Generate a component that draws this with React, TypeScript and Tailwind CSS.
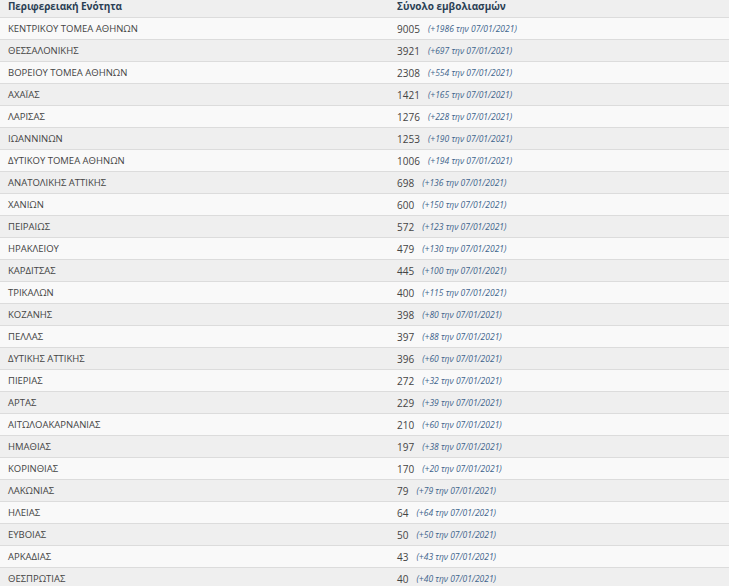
const rows: [string, number, number][] = [
    ["ΚΕΝΤΡΙΚΟΥ ΤΟΜΕΑ ΑΘΗΝΩΝ", 9005, 1986],
    ["ΘΕΣΣΑΛΟΝΙΚΗΣ", 3921, 697],
    ["ΒΟΡΕΙΟΥ ΤΟΜΕΑ ΑΘΗΝΩΝ", 2308, 554],
    ["ΑΧΑΪΑΣ", 1421, 165],
    ["ΛΑΡΙΣΑΣ", 1276, 228],
    ["ΙΩΑΝΝΙΝΩΝ", 1253, 190],
    ["ΔΥΤΙΚΟΥ ΤΟΜΕΑ ΑΘΗΝΩΝ", 1006, 194],
    ["ΑΝΑΤΟΛΙΚΗΣ ΑΤΤΙΚΗΣ", 698, 136],
    ["ΧΑΝΙΩΝ", 600, 150],
    ["ΠΕΙΡΑΙΩΣ", 572, 123],
    ["ΗΡΑΚΛΕΙΟΥ", 479, 130],
    ["ΚΑΡΔΙΤΣΑΣ", 445, 100],
    ["ΤΡΙΚΑΛΩΝ", 400, 115],
    ["ΚΟΖΑΝΗΣ", 398, 80],
    ["ΠΕΛΛΑΣ", 397, 88],
    ["ΔΥΤΙΚΗΣ ΑΤΤΙΚΗΣ", 396, 60],
    ["ΠΙΕΡΙΑΣ", 272, 32],
    ["ΑΡΤΑΣ", 229, 39],
    ["ΑΙΤΩΛΟΑΚΑΡΝΑΝΙΑΣ", 210, 60],
    ["ΗΜΑΘΙΑΣ", 197, 38],
    ["ΚΟΡΙΝΘΙΑΣ", 170, 20],
    ["ΛΑΚΩΝΙΑΣ", 79, 79],
    ["ΗΛΕΙΑΣ", 64, 64],
    ["ΕΥΒΟΙΑΣ", 50, 50],
    ["ΑΡΚΑΔΙΑΣ", 43, 43],
    ["ΘΕΣΠΡΩΤΙΑΣ", 40, 40],
]

const App = () => {
    return (
        <div className="w-[729px] h-[586px] overflow-hidden bg-[#efefef] font-['Open_Sans',sans-serif]">
            <div className="flex h-[17px] items-center pb-[4px] text-[10px] font-bold text-[#2b3f55]">
                <div className="w-[389px] pl-2 tracking-[-0.1px]">Περιφερειακή Ενότητα</div>
                <div className="pl-2">Σύνολο εμβολιασμών</div>
            </div>
            {rows.map(([name, total, diff], i) => (
                <div
                    key={name}
                    className={i % 2 === 0
                        ? "flex h-[22px] items-center pt-px border-t border-[#dcdcdc] bg-[#f9f9f9] text-[9.5px] text-[#444]"
                        : "flex h-[22px] items-center pt-px border-t border-[#dcdcdc] bg-[#efefef] text-[9.5px] text-[#444]"}
                >
                    <div className="w-[389px] pl-2">{name}</div>
                    <div className="pl-2 flex items-center gap-[8px]">
                        <span className="text-[10px]">{total}</span>
                        <span className="text-[8.5px] italic text-[#40648c]">(+{diff} την 07/01/2021)</span>
                    </div>
                </div>
            ))}
        </div>
    )
}

export default App
